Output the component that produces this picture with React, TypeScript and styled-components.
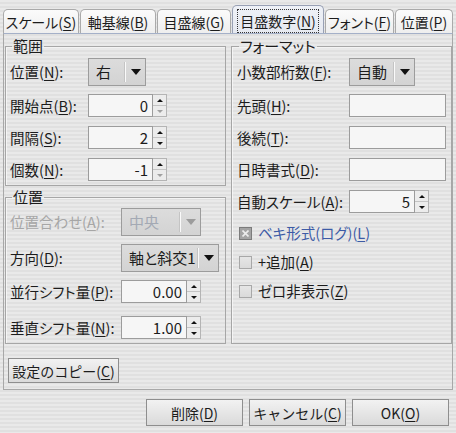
import React from 'react';
import styled, { createGlobalStyle } from 'styled-components';

const Global = createGlobalStyle`
  html, body { margin: 0; padding: 0; }
  body {
    font-family: "Noto Sans CJK JP", "Noto Sans", sans-serif;
    font-size: 15px;
    color: #1c1c1c;
    font-feature-settings: "palt";
  }
`;

const Window = styled.div`
  width: 456px;
  height: 433px;
  box-sizing: border-box;
  overflow: hidden;
  padding: 5px 3px 0 3px;
  display: flex;
  flex-direction: column;
  background: repeating-linear-gradient(to bottom, #e9e9e9 0 2px, #e0e0e0 2px 4px);
`;

const TabBar = styled.div`
  display: flex;
  align-items: flex-end;
  gap: 1px;
  height: 28px;
`;

const Tab = styled.div<{ $w: number; $active?: boolean }>`
  width: ${p => p.$w}px;
  height: ${p => (p.$active ? 28 : 24)}px;
  box-sizing: border-box;
  border: 1px solid ${p => (p.$active ? '#98a0b4' : '#aaaaaa')};
  border-bottom: none;
  border-radius: 5px 5px 0 0;
  background: ${p =>
    p.$active
      ? 'linear-gradient(#eef1f7, #e6e9f0)'
      : 'linear-gradient(#fbfbfb, #eeeeee)'};
  display: flex;
  align-items: center;
  justify-content: center;
  padding-top: ${p => (p.$active ? 3 : 0)}px;
  font-size: 14px;
  line-height: 18px;
  white-space: nowrap;
`;

const Focus = styled.span`
  outline: 1px dotted #333;
  outline-offset: 1px;
  padding: 1px 1px;
`;

const Panel = styled.div`
  height: 357px;
  box-sizing: border-box;
  border: 1px solid #a8a8a8;
  border-top-color: #a4b0c8;
  padding: 4px 0 0 1px;
  display: flex;
  flex-direction: column;
`;

const Columns = styled.div`
  display: grid;
  grid-template-columns: 221px 221px;
  column-gap: 5px;
  height: 306px;
`;

const LeftCol = styled.div`
  display: flex;
  flex-direction: column;
  gap: 3px;
`;

const Group = styled.fieldset<{ $pt: number; $pb: number; $pl: number }>`
  margin: 0;
  min-width: 0;
  border: 1px solid #a6a6a6;
  padding: ${p => p.$pt}px 0 ${p => p.$pb}px ${p => p.$pl}px;
  display: flex;
  flex-direction: column;
  box-shadow: inset 1px 1px 0 rgba(255, 255, 255, 0.6);
`;

const Legend = styled.legend`
  padding: 0 1px;
  margin-left: 2px;
  font-size: 15px;
  line-height: 16px;
  height: 16px;
`;

const Row = styled.div<{ $h: number; $mb?: number; $lw: number }>`
  display: grid;
  grid-template-columns: ${p => p.$lw}px auto;
  align-items: center;
  height: ${p => p.$h}px;
  margin-bottom: ${p => p.$mb ?? 0}px;
`;

const Label = styled.span<{ $off?: boolean }>`
  font-size: 14.5px;
  line-height: 18px;
  white-space: nowrap;
  color: ${p => (p.$off ? '#a6a6a6' : '#1c1c1c')};
`;

const U = styled.u`
  text-underline-offset: 2px;
  text-decoration-thickness: 1px;
`;

const Combo = styled.div<{ $w: number; $off?: boolean }>`
  width: ${p => p.$w}px;
  height: 28px;
  box-sizing: border-box;
  border: 1px solid #9c9c9c;
  background: linear-gradient(#dcdcdc, #d3d3d3);
  display: flex;
  align-items: center;
  padding-left: 7px;
  color: ${p => (p.$off ? '#a3a9b4' : '#1c1c1c')};
`;

const ComboText = styled.span`
  flex: 1;
  line-height: 18px;
  white-space: nowrap;
`;

const ComboArrow = styled.span<{ $off?: boolean }>`
  width: 20px;
  height: 20px;
  box-sizing: border-box;
  border-left: 1px solid #fafafa;
  box-shadow: -1px 0 0 #c4c4c4;
  display: flex;
  align-items: center;
  justify-content: center;
  &::after {
    content: '';
    border-top: 6px solid ${p => (p.$off ? '#9c9c9c' : '#111')};
    border-left: 5.5px solid transparent;
    border-right: 5.5px solid transparent;
  }
`;

const Spin = styled.div<{ $w: number }>`
  width: ${p => p.$w}px;
  height: 23px;
  display: flex;
`;

const Field = styled.div<{ $w?: number }>`
  ${p => (p.$w ? `width: ${p.$w}px;` : 'flex: 1;')}
  height: 23px;
  box-sizing: border-box;
  border: 1px solid #9c9c9c;
  background: #f6f6f6;
  text-align: right;
  padding-right: 4px;
  line-height: 21px;
  font-size: 15px;
`;

const SpinButtons = styled.div`
  width: 14px;
  display: flex;
  flex-direction: column;
  box-sizing: border-box;
  border: 1px solid #b4b4b4;
  border-left: none;
  background: #ececec;
`;

const SpinBtn = styled.div<{ $down?: boolean; $off?: boolean }>`
  flex: 1;
  display: flex;
  align-items: center;
  justify-content: center;
  border-top: ${p => (p.$down ? '1px solid #c4c4c4' : 'none')};
  &::after {
    content: '';
    border-left: 3px solid transparent;
    border-right: 3px solid transparent;
    ${p =>
      p.$down
        ? `border-top: 3px solid ${p.$off ? '#a0a0a0' : '#111'};`
        : `border-bottom: 3px solid ${p.$off ? '#a0a0a0' : '#111'};`}
  }
`;

const CheckRow = styled.label<{ $mb?: number; $blue?: boolean }>`
  display: flex;
  align-items: center;
  gap: 6px;
  height: 20px;
  padding-left: 2px;
  margin-bottom: ${p => p.$mb ?? 0}px;
  font-size: 14.5px;
  line-height: 18px;
  color: ${p => (p.$blue ? '#3d5ba6' : '#1c1c1c')};
`;

const Box = styled.span<{ $checked?: boolean }>`
  width: 13px;
  height: 13px;
  box-sizing: border-box;
  border: 1px solid ${p => (p.$checked ? '#7c7c7c' : '#a8a8a8')};
  background: ${p => (p.$checked ? '#a4a4a4' : 'linear-gradient(#e6e6e6, #dadada)')};
  display: flex;
  align-items: center;
  justify-content: center;
`;

const CopyRow = styled.div`
  margin-top: 14px;
  padding-left: 3px;
  display: flex;
`;

const Button = styled.button<{ $w: number; $h: number }>`
  width: ${p => p.$w}px;
  height: ${p => p.$h}px;
  box-sizing: border-box;
  border: 1px solid #8e8e8e;
  background: linear-gradient(#f2f2f2, #dadada);
  font-family: inherit;
  font-size: 14px;
  color: #1c1c1c;
  padding: 0;
  line-height: 18px;
  white-space: nowrap;
`;

const Footer = styled.div`
  margin-top: 9px;
  padding-right: 4px;
  display: flex;
  justify-content: flex-end;
  gap: 6px;
`;

function M({ s }: { s: string }) {
  const i = s.indexOf('&');
  if (i < 0) return <>{s}</>;
  return (
    <>
      {s.slice(0, i)}
      <U>{s[i + 1]}</U>
      {s.slice(i + 2)}
    </>
  );
}

function SpinBox({ w, value, upOff, downOff }: { w: number; value: string; upOff?: boolean; downOff?: boolean }) {
  return (
    <Spin $w={w}>
      <Field>{value}</Field>
      <SpinButtons>
        <SpinBtn $off={upOff} />
        <SpinBtn $down $off={downOff} />
      </SpinButtons>
    </Spin>
  );
}

function ComboBox({ w, text, off }: { w: number; text: string; off?: boolean }) {
  return (
    <Combo $w={w} $off={off}>
      <ComboText>{text}</ComboText>
      <ComboArrow $off={off} />
    </Combo>
  );
}

const tabs = [
  { t: 'スケール(&S)', w: 76 },
  { t: '軸基線(&B)', w: 76 },
  { t: '目盛線(&G)', w: 74 },
  { t: '目盛数字(&N)', w: 92, active: true },
  { t: 'フォント(&F)', w: 69 },
  { t: '位置(&P)', w: 58 },
];

export default function App() {
  return (
    <>
      <Global />
      <Window>
        <TabBar>
          {tabs.map(tb => (
            <Tab key={tb.t} $w={tb.w} $active={tb.active}>
              {tb.active ? (
                <Focus>
                  <M s={tb.t} />
                </Focus>
              ) : (
                <M s={tb.t} />
              )}
            </Tab>
          ))}
        </TabBar>
        <Panel>
          <Columns>
            <LeftCol>
              <Group $pt={4} $pb={3} $pl={4}>
                <Legend>範囲</Legend>
                <Row $h={28} $mb={8} $lw={78}>
                  <Label><M s="位置(&N):" /></Label>
                  <ComboBox w={58} text="右" />
                </Row>
                <Row $h={23} $mb={9} $lw={78}>
                  <Label><M s="開始点(&B):" /></Label>
                  <SpinBox w={79} value="0" downOff />
                </Row>
                <Row $h={23} $mb={9} $lw={78}>
                  <Label><M s="間隔(&S):" /></Label>
                  <SpinBox w={79} value="2" />
                </Row>
                <Row $h={23} $mb={1} $lw={78}>
                  <Label><M s="個数(&N):" /></Label>
                  <SpinBox w={79} value="-1" downOff />
                </Row>
              </Group>
              <Group $pt={3} $pb={4} $pl={4}>
                <Legend>位置</Legend>
                <Row $h={28} $mb={8} $lw={111}>
                  <Label $off><M s="位置合わせ(&A):" /></Label>
                  <ComboBox w={80} text="中央" off />
                </Row>
                <Row $h={28} $mb={8} $lw={111}>
                  <Label><M s="方向(&D):" /></Label>
                  <ComboBox w={98} text="軸と斜交1" />
                </Row>
                <Row $h={23} $mb={13} $lw={111}>
                  <Label><M s="並行シフト量(&P):" /></Label>
                  <SpinBox w={80} value="0.00" />
                </Row>
                <Row $h={23} $lw={111}>
                  <Label><M s="垂直シフト量(&N):" /></Label>
                  <SpinBox w={80} value="1.00" />
                </Row>
              </Group>
            </LeftCol>
            <Group $pt={4} $pb={3} $pl={5}>
              <Legend>フォーマット</Legend>
              <Row $h={28} $mb={8} $lw={112}>
                <Label><M s="小数部桁数(&F):" /></Label>
                <ComboBox w={66} text="自動" />
              </Row>
              <Row $h={23} $mb={9} $lw={112}>
                <Label><M s="先頭(&H):" /></Label>
                <Field $w={97} />
              </Row>
              <Row $h={23} $mb={9} $lw={112}>
                <Label><M s="後続(&T):" /></Label>
                <Field $w={97} />
              </Row>
              <Row $h={23} $mb={9} $lw={112}>
                <Label><M s="日時書式(&D):" /></Label>
                <Field $w={97} />
              </Row>
              <Row $h={23} $mb={10} $lw={112}>
                <Label><M s="自動スケール(&A):" /></Label>
                <SpinBox w={80} value="5" />
              </Row>
              <CheckRow $mb={9} $blue>
                <Box $checked>
                  <svg width="7" height="7" viewBox="0 0 7 7">
                    <path d="M0.5 0.5 L6.5 6.5 M6.5 0.5 L0.5 6.5" stroke="#ececec" strokeWidth="1.6" />
                  </svg>
                </Box>
                <span><M s="ベキ形式(ログ)(&L)" /></span>
              </CheckRow>
              <CheckRow $mb={9}>
                <Box />
                <span><M s="+追加(&A)" /></span>
              </CheckRow>
              <CheckRow>
                <Box />
                <span><M s="ゼロ非表示(&Z)" /></span>
              </CheckRow>
            </Group>
          </Columns>
          <CopyRow>
            <Button $w={111} $h={25}><M s="設定のコピー(&C)" /></Button>
          </CopyRow>
        </Panel>
        <Footer>
          <Button $w={97} $h={27}><M s="削除(&D)" /></Button>
          <Button $w={97} $h={27}><M s="キャンセル(&C)" /></Button>
          <Button $w={97} $h={27}><M s="OK(&O)" /></Button>
        </Footer>
      </Window>
    </>
  );
}
